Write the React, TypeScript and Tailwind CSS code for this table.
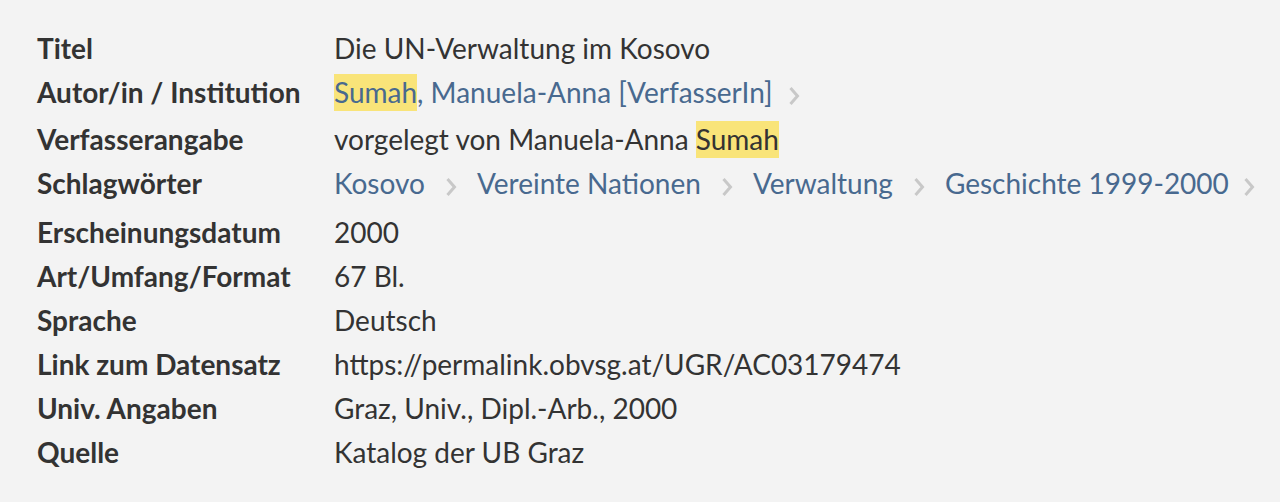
import React from "react";

const Chev = () => (
  <svg width="12" height="20" viewBox="0 0 12 20" className="shrink-0 mt-[7px]">
    <polyline points="2.5,2 9.5,10 2.5,18" fill="none" stroke="#c8c8c8" strokeWidth="3" />
  </svg>
);

const Hl = ({ children }: { children: React.ReactNode }) => (
  <span className="bg-[#f9e479] pt-[1px] pb-[2px]">{children}</span>
);

const rows: { label: string; h: string; value: React.ReactNode }[] = [
  { label: "Titel", h: "h-[44px]", value: <span>Die UN-Verwaltung im Kosovo</span> },
  {
    label: "Autor/in / Institution",
    h: "h-[47px]",
    value: (
      <span className="flex items-center gap-[15px]">
        <span className="text-[#48698f]">
          <Hl>Sumah</Hl>, Manuela-Anna [VerfasserIn]
        </span>
        <Chev />
      </span>
    ),
  },
  {
    label: "Verfasserangabe",
    h: "h-[44px]",
    value: (
      <span>
        vorgelegt von Manuela-Anna <Hl>Sumah</Hl>
      </span>
    ),
  },
  {
    label: "Schlagwörter",
    h: "h-[49px]",
    value: (
      <span className="flex items-center text-[#48698f]">
        <span>Kosovo</span>
        <span className="mx-[20px] flex"><Chev /></span>
        <span>Vereinte Nationen</span>
        <span className="mx-[20px] flex"><Chev /></span>
        <span>Verwaltung</span>
        <span className="mx-[20px] flex"><Chev /></span>
        <span>Geschichte 1999-2000</span>
        <span className="ml-[14px] flex"><Chev /></span>
      </span>
    ),
  },
  { label: "Erscheinungsdatum", h: "h-[44px]", value: <span>2000</span> },
  { label: "Art/Umfang/Format", h: "h-[44px]", value: <span>67 Bl.</span> },
  { label: "Sprache", h: "h-[44px]", value: <span>Deutsch</span> },
  { label: "Link zum Datensatz", h: "h-[44px]", value: <span>https://permalink.obvsg.at/UGR/AC03179474</span> },
  { label: "Univ. Angaben", h: "h-[44px]", value: <span>Graz, Univ., Dipl.-Arb., 2000</span> },
  { label: "Quelle", h: "h-[44px]", value: <span>Katalog der UB Graz</span> },
];

export default function App() {
  return (
    <div
      className="w-[1280px] h-[502px] bg-[#f3f3f3] text-[#333333] pt-[30px] pl-[37px]"
      style={{ fontFamily: "Lato, 'Open Sans', sans-serif" }}
    >
      {rows.map((r) => (
        <div key={r.label} className={`flex items-start ${r.h} text-[28px] leading-[36px]`}>
          <div className="w-[297px] shrink-0 font-bold">{r.label}</div>
          <div className="flex items-center">{r.value}</div>
        </div>
      ))}
    </div>
  );
}
